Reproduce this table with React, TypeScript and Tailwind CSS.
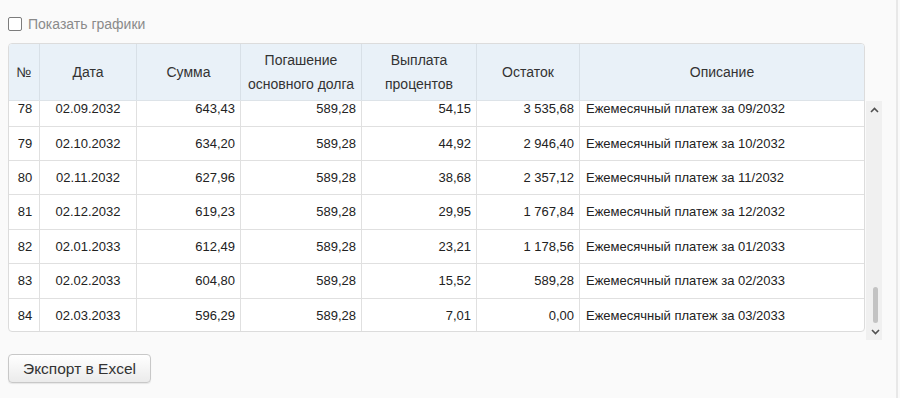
import React from "react";

const rows = [
  ["78", "02.09.2032", "643,43", "589,28", "54,15", "3 535,68", "Ежемесячный платеж за 09/2032"],
  ["79", "02.10.2032", "634,20", "589,28", "44,92", "2 946,40", "Ежемесячный платеж за 10/2032"],
  ["80", "02.11.2032", "627,96", "589,28", "38,68", "2 357,12", "Ежемесячный платеж за 11/2032"],
  ["81", "02.12.2032", "619,23", "589,28", "29,95", "1 767,84", "Ежемесячный платеж за 12/2032"],
  ["82", "02.01.2033", "612,49", "589,28", "23,21", "1 178,56", "Ежемесячный платеж за 01/2033"],
  ["83", "02.02.2033", "604,80", "589,28", "15,52", "589,28", "Ежемесячный платеж за 02/2033"],
  ["84", "02.03.2033", "596,29", "589,28", "7,01", "0,00", "Ежемесячный платеж за 03/2033"],
];

const grid = "grid grid-cols-[31px_97px_104px_121px_115px_103px_1fr]";

function Chevron({ up }: { up?: boolean }) {
  return (
    <svg width="9" height="6" viewBox="0 0 9 6">
      <path
        d={up ? "M1 5 L4.5 1.5 L8 5" : "M1 1 L4.5 4.5 L8 1"}
        fill="none"
        stroke="#505050"
        strokeWidth="1.6"
      />
    </svg>
  );
}

export default function App() {
  const headers: React.ReactNode[] = [
    "№",
    "Дата",
    "Сумма",
    <>Погашение<br />основного долга</>,
    <>Выплата<br />процентов</>,
    "Остаток",
    "Описание",
  ];
  return (
    <div className="w-[900px] h-[398px] bg-[#fafafa] flex overflow-hidden font-['Liberation_Sans',Arial,sans-serif]">
      <div className="w-[896px] pl-[8px] pt-[17px] flex flex-col items-start">
        <div className="flex items-center h-[14px]">
          <div className="w-[14px] h-[14px] border-[1.5px] border-[#7c7c7c] bg-white rounded-[2px]" />
          <span className="ml-[6px] text-[14px] leading-[14px] text-[#8a8a8a]">Показать графики</span>
        </div>
        <div className="flex mt-[12px] items-start">
          <div className="w-[857px] h-[289px] border border-[#dcdcdc] rounded-[4px] overflow-hidden bg-white">
            <div className={`${grid} h-[57px] bg-[#e9f1f8] border-b border-[#dde3e8]`}>
              {headers.map((h, i) => (
                <div
                  key={i}
                  className={`flex items-center justify-center text-center text-[14px] leading-[24px] text-[#333] ${i < 6 ? "border-r border-[#d8e0e7]" : ""}`}
                >
                  <div>{h}</div>
                </div>
              ))}
            </div>
            <div className="h-[230px] overflow-hidden">
              <div className="-mt-[8.7px]">
                {rows.map((r) => (
                  <div key={r[0]} className={`${grid} h-[34.4px] border-b border-[#e0e0e0] text-[13px] text-[#222]`}>
                    {r.map((c, i) => (
                      <div
                        key={i}
                        className={`flex items-center ${i < 6 ? "border-r border-[#e0e0e0]" : ""} ${
                          i === 0 ? "justify-center pl-[2px]" : i === 1 ? "justify-center" : i === 6 ? "justify-start pl-[6px]" : "justify-end pr-[5px]"
                        }`}
                      >
                        {c}
                      </div>
                    ))}
                  </div>
                ))}
              </div>
            </div>
          </div>
          <div className="w-[16px] h-[239px] mt-[58px] ml-[1px] bg-[#f0f0f0] flex flex-col items-center">
            <div className="h-[16px] flex items-center justify-center pt-[2px]">
              <Chevron up />
            </div>
            <div className="flex-1" />
            <div className="w-[5px] h-[36px] rounded-[3px] bg-[#c3c3c3] mb-[1px] ml-[3px]" />
            <div className="h-[16px] flex items-center justify-center ml-[2px]">
              <Chevron />
            </div>
          </div>
        </div>
        <button className="mt-[14px] w-[143px] h-[29px] border border-[#c8c8c8] rounded-[4px] bg-gradient-to-b from-white to-[#ebebeb] text-[15.5px] text-[#333] shadow-[0_1px_1px_rgba(0,0,0,0.08)]">
          Экспорт в Excel
        </button>
      </div>
      <div className="w-[2px] h-full bg-[#e8e8e8]" />
    </div>
  );
}
